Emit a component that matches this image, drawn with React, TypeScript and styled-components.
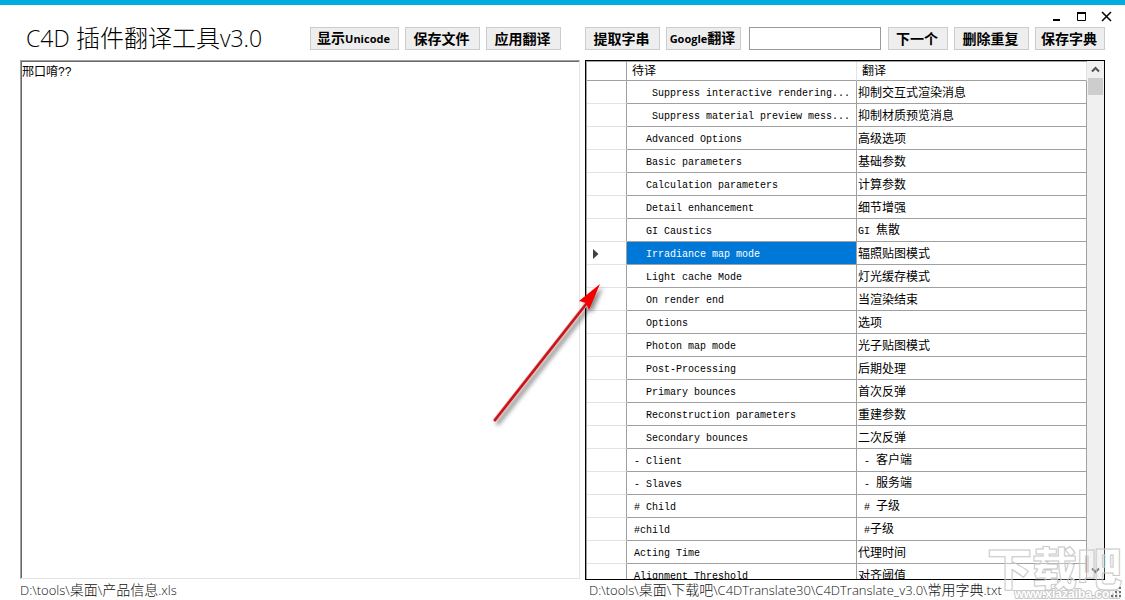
import React from 'react';
import styled, { createGlobalStyle } from 'styled-components';

const GlobalStyle = createGlobalStyle`
  * { box-sizing: border-box; }
  body {
    margin: 0;
    background: #fff;
    color: #000;
    font-family: "Open Sans", "Noto Sans CJK SC", sans-serif;
  }
  button, input, textarea { font: inherit; color: inherit; border-radius: 0; }
`;

const Window = styled.div`
  position: relative;
  display: flex;
  flex-direction: column;
  height: 100vh;
  border-top: 5px solid #00addc;
  overflow: hidden;
`;

const WindowControls = styled.div`
  display: flex;
  justify-content: flex-end;
  height: 22px;
  padding-right: 6px;
`;

const ControlButton = styled.button`
  width: 25px;
  height: 22px;
  padding: 0;
  border: 0;
  background: transparent;
  svg { display: block; margin: auto; }
`;

const Columns = styled.div`
  display: grid;
  grid-template-columns: 560fr 520fr;
  column-gap: 5px;
  padding: 0 20px;
`;

const Header = styled(Columns)`
  margin-bottom: 10px;
`;

const Body = styled(Columns)`
  flex: 1;
  min-height: 0;
`;

const StatusBar = styled(Columns)`
  position: relative;
  height: 20px;
`;

const Toolbar = styled.div`
  display: flex;
  align-items: center;
  gap: 6px;
  height: 23px;
  min-width: 0;
`;

const Title = styled.h1`
  flex: 1;
  margin: 0;
  padding: 0 0 2px 6px;
  font-size: 24px;
  line-height: 24px;
  font-weight: 300;
  white-space: nowrap;
`;

const TitleLatin = styled.span`
  font-size: 23px;
`;

const LeftToolbar = styled(Toolbar)`
  padding-right: 19px;
`;

const ToolButton = styled.button<{ $width: number }>`
  flex: none;
  width: ${(p) => p.$width}px;
  height: 23px;
  padding: 0 2px 0 0;
  border: 1px solid #ccc;
  background: #eee;
  font-size: 14px;
  line-height: 20px;
  font-weight: 700;
  white-space: nowrap;
`;

const Latin = styled.span`
  font-size: 11px;
`;

const SearchInput = styled.input`
  flex: 1;
  min-width: 0;
  height: 23px;
  margin: 0 1px 0 2px;
  padding: 0 4px;
  border: 1px solid #999;
  background: #fff;
  font-size: 12px;
  outline: none;
`;

const Editor = styled.textarea`
  width: 100%;
  height: calc(100% - 1px);
  padding: 3px 1px;
  border: 1px solid #a0a0a0;
  border-right-color: #e3e3e3;
  border-bottom-color: #e3e3e3;
  box-shadow: inset 1px 1px 0 #696969;
  background: #fff;
  font-family: "Liberation Sans", "Noto Sans CJK SC", sans-serif;
  font-size: 12px;
  line-height: 16px;
  resize: none;
  outline: none;
`;

const GridPanel = styled.div`
  position: relative;
  display: flex;
  min-height: 0;
  border: 1px solid #000;
`;

const GridView = styled.div`
  flex: 1;
  min-width: 0;
  overflow: hidden;
  border-top: 1px solid #a0a0a0;
  border-left: 1px solid #a0a0a0;
`;

const Table = styled.table`
  width: 100%;
  table-layout: fixed;
  border-collapse: separate;
  border-spacing: 0;
  font-family: "Liberation Mono", "Noto Sans CJK SC", monospace;
  font-size: 12px;
`;

const MarkerCol = styled.col`
  width: 40px;
`;

const HeadCell = styled.th`
  height: 19px;
  padding: 3px 5px 0;
  border-right: 1px solid #e3e3e3;
  border-bottom: 1px solid #a0a0a0;
  line-height: 15px;
  font-weight: 400;
  text-align: left;
`;

const HeadMarker = styled.td`
  border-right: 1px solid #a0a0a0;
  border-bottom: 1px solid #a0a0a0;
`;

const RowMarker = styled.td`
  height: 23px;
  padding: 2px 0 0 6px;
  border-right: 1px solid #a0a0a0;
  border-bottom: 1px solid #e3e3e3;
  svg { display: block; }
`;

const Cell = styled.td<{ $selected?: boolean }>`
  height: 23px;
  padding: 3px 1px 0;
  border-right: 1px solid #a0a0a0;
  border-bottom: 1px solid #a0a0a0;
  background: ${(p) => (p.$selected ? '#0078d7' : 'transparent')};
  color: ${(p) => (p.$selected ? '#fff' : '#000')};
  line-height: 18px;
  white-space: pre;
  overflow: hidden;
`;

const Narrow = styled.span`
  font-size: 10px;
`;

const ScrollBar = styled.div`
  display: flex;
  flex-direction: column;
  width: 17px;
  background: #f0f0f0;
`;

const ScrollButton = styled.button`
  width: 17px;
  height: 17px;
  padding: 0;
  border: 0;
  background: transparent;
  svg { display: block; margin: auto; }
`;

const ScrollTrack = styled.div`
  flex: 1;
  padding: 0 1px;
`;

const ScrollThumb = styled.div`
  height: 17px;
  background: #cdcdcd;
`;

const Path = styled.span<{ $indent?: number }>`
  padding-left: ${(p) => p.$indent ?? 0}px;
  font-size: 13px;
  line-height: 20px;
  font-weight: 300;
  color: #111;
  white-space: nowrap;
`;

const Wide = styled.span`
  font-size: 14px;
`;

const Grip = styled.svg`
  position: absolute;
  z-index: 1;
  right: 4px;
  bottom: 3px;
`;

const Pointer = styled.svg`
  position: absolute;
  left: -96px;
  top: 219px;
  overflow: visible;
  pointer-events: none;
  filter: drop-shadow(3px 3px 2px rgba(0, 0, 0, 0.45));
`;

const Watermark = styled.div`
  position: absolute;
  right: 3px;
  bottom: 0;
  text-align: right;
  pointer-events: none;
`;

const WatermarkName = styled.div`
  font-family: "Noto Sans CJK SC", sans-serif;
  font-size: 45px;
  line-height: 42px;
  font-weight: 900;
  color: rgba(255, 255, 255, 0.3);
  -webkit-text-stroke: 1px #c8c8c8;
`;

const WatermarkSite = styled.div`
  padding-right: 2px;
  font-family: "Liberation Sans", sans-serif;
  font-size: 12px;
  line-height: 12px;
  font-weight: 700;
  color: #fff;
  -webkit-text-stroke: 2px #c8c8c8;
  paint-order: stroke fill;
`;

type Row = { source: string; latin?: string; target: string; selected?: boolean };

const rows: Row[] = [
  { source: '    Suppress interactive rendering...', target: '抑制交互式渲染消息' },
  { source: '    Suppress material preview mess...', target: '抑制材质预览消息' },
  { source: '   Advanced Options', target: '高级选项' },
  { source: '   Basic parameters', target: '基础参数' },
  { source: '   Calculation parameters', target: '计算参数' },
  { source: '   Detail enhancement', target: '细节增强' },
  { source: '   GI Caustics', latin: 'GI ', target: '焦散' },
  { source: '   Irradiance map mode', target: '辐照贴图模式', selected: true },
  { source: '   Light cache Mode', target: '灯光缓存模式' },
  { source: '   On render end', target: '当渲染结束' },
  { source: '   Options', target: '选项' },
  { source: '   Photon map mode', target: '光子贴图模式' },
  { source: '   Post-Processing', target: '后期处理' },
  { source: '   Primary bounces', target: '首次反弹' },
  { source: '   Reconstruction parameters', target: '重建参数' },
  { source: '   Secondary bounces', target: '二次反弹' },
  { source: ' - Client', latin: ' - ', target: '客户端' },
  { source: ' - Slaves', latin: ' - ', target: '服务端' },
  { source: ' # Child', latin: ' # ', target: '子级' },
  { source: ' #child', latin: ' #', target: '子级' },
  { source: ' Acting Time', target: '代理时间' },
  { source: ' Alignment Threshold', target: '对齐阈值' },
];

export default function App() {
  return (
    <>
      <GlobalStyle />
      <Window>
        <WindowControls>
          <ControlButton aria-label="Minimize">
            <svg width="11" height="11" viewBox="0 0 11 11">
              <path d="M2 9h7" stroke="#000" strokeWidth="2" />
            </svg>
          </ControlButton>
          <ControlButton aria-label="Maximize">
            <svg width="11" height="11" viewBox="0 0 11 11">
              <path d="M1.500 1v8.500h8V1" fill="none" stroke="#000" />
              <path d="M1 2h9" stroke="#000" strokeWidth="2" />
            </svg>
          </ControlButton>
          <ControlButton aria-label="Close">
            <svg width="11" height="11" viewBox="0 0 11 11">
              <path d="M1 1l9 9M10 1l-9 9" stroke="#000" strokeWidth="1.500" />
            </svg>
          </ControlButton>
        </WindowControls>

        <Header>
          <LeftToolbar>
            <Title>
              <TitleLatin>C4D</TitleLatin> 插件翻译工具<TitleLatin>v3.0</TitleLatin>
            </Title>
            <ToolButton $width={89}>显示<Latin>Unicode</Latin></ToolButton>
            <ToolButton $width={75}>保存文件</ToolButton>
            <ToolButton $width={75}>应用翻译</ToolButton>
          </LeftToolbar>
          <Toolbar>
            <ToolButton $width={75}>提取字串</ToolButton>
            <ToolButton $width={75}><Latin>Google</Latin>翻译</ToolButton>
            <SearchInput type="text" aria-label="查找" />
            <ToolButton $width={60}>下一个</ToolButton>
            <ToolButton $width={75}>删除重复</ToolButton>
            <ToolButton $width={70}>保存字典</ToolButton>
          </Toolbar>
        </Header>

        <Body>
          <Editor aria-label="文件内容" spellCheck={false} defaultValue="邢口唷??" />
          <GridPanel>
            <GridView>
              <Table>
                <colgroup>
                  <MarkerCol />
                  <col />
                  <col />
                </colgroup>
                <thead>
                  <tr>
                    <HeadMarker />
                    <HeadCell scope="col">待译</HeadCell>
                    <HeadCell scope="col">翻译</HeadCell>
                  </tr>
                </thead>
                <tbody>
                  {rows.map((row) => (
                    <tr key={row.source}>
                      <RowMarker>
                        {row.selected && (
                          <svg width="6" height="10" viewBox="0 0 6 10">
                            <path d="M0 0l5.500 5L0 10z" fill="#404040" />
                          </svg>
                        )}
                      </RowMarker>
                      <Cell $selected={row.selected}><Narrow>{row.source}</Narrow></Cell>
                      <Cell>
                        {row.latin && <Narrow>{row.latin}</Narrow>}
                        {row.target}
                      </Cell>
                    </tr>
                  ))}
                </tbody>
              </Table>
            </GridView>
            <ScrollBar>
              <ScrollButton aria-label="Scroll up">
                <svg width="9" height="9" viewBox="0 0 9 9">
                  <path d="M1 6.500l3.500-3.500L8 6.500" fill="none" stroke="#505050" strokeWidth="2" />
                </svg>
              </ScrollButton>
              <ScrollTrack>
                <ScrollThumb />
              </ScrollTrack>
              <ScrollButton aria-label="Scroll down">
                <svg width="9" height="9" viewBox="0 0 9 9">
                  <path d="M1 2.500l3.500 3.500L8 2.500" fill="none" stroke="#505050" strokeWidth="2" />
                </svg>
              </ScrollButton>
            </ScrollBar>
            <Pointer width="120" height="150" viewBox="0 0 120 150">
              <path d="M5 140L97 23" stroke="#f6b3b3" strokeWidth="4" strokeLinecap="round" />
              <path d="M5 140L97 23" stroke="#c4161c" strokeWidth="2.600" strokeLinecap="round" />
              <path d="M110 4L89 21l7 2 3 7z" fill="#f40000" />
            </Pointer>
          </GridPanel>
        </Body>

        <StatusBar>
          <Path>
            D:\tools\<Wide>桌面</Wide>\<Wide>产品信息</Wide>.xls
          </Path>
          <Path $indent={4}>
            D:\tools\<Wide>桌面</Wide>\<Wide>下载吧</Wide>\C4DTranslate30\C4DTranslate_v3.0\
            <Wide>常用字典</Wide>.txt
          </Path>
          <Grip width="10" height="10" viewBox="0 0 10 10">
            <path
              d="M8 0h2v2h-2zM4 4h2v2h-2zM8 4h2v2h-2zM0 8h2v2h-2zM4 8h2v2h-2zM8 8h2v2h-2z"
              fill="#707070"
            />
          </Grip>
        </StatusBar>

        <Watermark>
          <WatermarkName>下载吧</WatermarkName>
          <WatermarkSite>www.xiazaiba.com</WatermarkSite>
        </Watermark>
      </Window>
    </>
  );
}
